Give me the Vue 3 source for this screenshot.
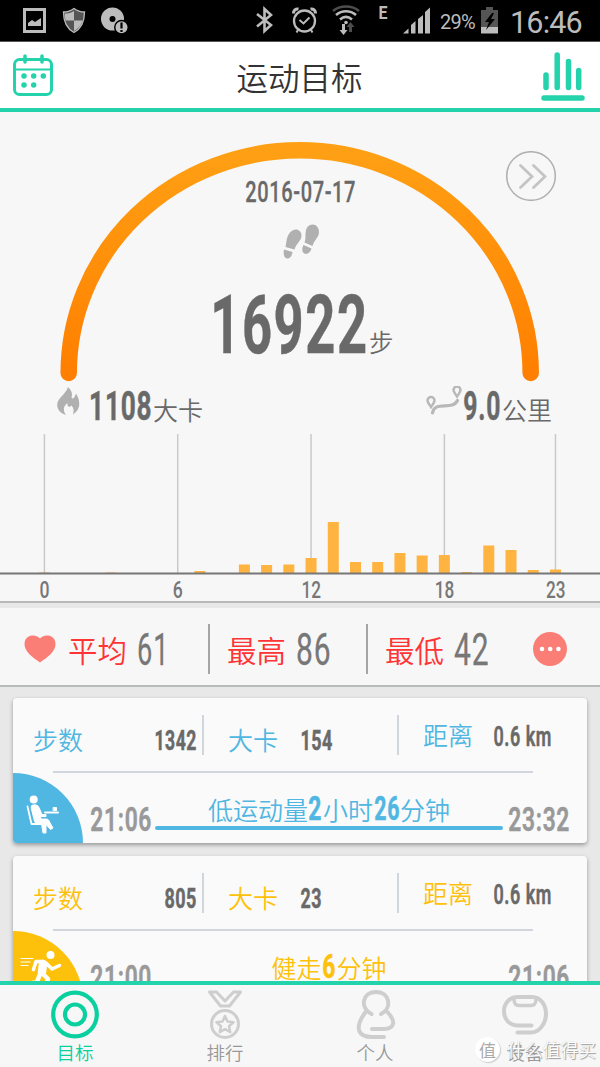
<template>
  <div class="app">
    <div class="status">
      <svg class="st-left" width="112" height="41" viewBox="0 0 112 41">
        <path d="M4.500 9.500h20v22h-20z" fill="none" stroke="#bcbcbc" stroke-width="3" />
        <path d="M8 26v-3l4-3 3 2 6-4v8z" fill="#bcbcbc" />
        <path d="M54 8.500c4 3 7 3.500 10.500 3.500 0 10-3 16.500-10.500 20.500-7.500-4-10.500-10.500-10.500-20.500C47 12 50 11.500 54 8.500z" fill="#555" stroke="#bcbcbc" stroke-width="1.300" />
        <path d="M54 11v9.500h-8.500c-.5-2-.5-5-.5-7 3 0 6-.5 9-2.500zM54 20.500h8.500c-1 4.500-4 8-8.500 10.500z" fill="#bcbcbc" />
        <circle cx="92.500" cy="19" r="11.500" fill="#bcbcbc" />
        <circle cx="92.500" cy="19" r="3" fill="#000" />
        <circle cx="101.500" cy="27.300" r="7.500" fill="#000" />
        <circle cx="101.500" cy="27.300" r="6" fill="#bcbcbc" />
        <path d="M101.500 22.500v6M101.500 30v2" stroke="#000" stroke-width="2.200" />
      </svg>
      <svg class="st-right" width="180" height="41" viewBox="250 0 180 41">
        <path d="M257 14l14 11-6.500 6V9l6.500 6-14 11.500" fill="none" stroke="#bcbcbc" stroke-width="2.600" />
        <g fill="none" stroke="#bcbcbc" stroke-width="2">
          <circle cx="304.500" cy="21" r="10.500" stroke-width="2.300" />
          <path d="M299.500 20l4 3.500 6-6M298 30l-1.500 2.500M311 30l1.500 2.500" />
          <path d="M293.500 13.500c0-3 2-5 5-4.500M315.500 13.500c0-3-2-5-5-4.500" stroke-width="3" />
        </g>
        <g fill="none" stroke="#bcbcbc" stroke-width="2.600">
          <path d="M333 11c7-6 19-6 26 0" stroke="#4d4d4d" />
          <path d="M336 15c6-5 14-5 20 0M340 19.500c4-3.500 8-3.500 12 0" />
        </g>
        <circle cx="346" cy="22.500" r="1.800" fill="#bcbcbc" />
        <path d="M342 24h3v6h2.500l-4 5-4-5h2.500z" fill="#bcbcbc" />
        <path d="M349 32h3v-5h2.500l-4-5-4 5h2.500z" fill="#4d4d4d" />
        <path d="M403 33.500l5.500-5v5zM411 33.500V25l4.500-4v12.500zM418 33.500V19l5-4v18.500zM425 33.500V12l5-4.500v26z" fill="#bcbcbc" />
        <text x="378.500" y="19" font-size="18" font-weight="700" fill="#bcbcbc" textLength="9" lengthAdjust="spacingAndGlyphs">E</text>
      </svg>
      <span class="percent">29%</span>
      <svg class="battery" width="17" height="27" viewBox="0 0 17 27">
        <path d="M5 0h7v3h5v17H0V3h5z" fill="#555" />
        <path d="M0 20h17v6.500H0z" fill="#bcbcbc" />
        <path d="M11 6l-7 9h4l-3 8 9-11h-4l3-6z" fill="#000" />
      </svg>
      <span class="clock">16:46</span>
    </div>

    <header class="header">
      <svg width="40" height="42" viewBox="0 0 40 42" fill="none" stroke="#24d3ac">
        <rect x="1.500" y="5.500" width="37" height="35" rx="5" stroke-width="3" />
        <path d="M1.500 15.500h37" stroke-width="2" />
        <path d="M12 2v6M29 2v6" stroke-width="3.500" stroke-linecap="round" />
        <path d="M11 22h.01M20.700 22h.01M30.300 22h.01M11 31h.01M20.700 31h.01" stroke-width="5.500" stroke-linecap="round" />
      </svg>
      <h1>运动目标</h1>
      <svg class="bars" width="44" height="50" viewBox="0 0 44 50" stroke="#24d3ac" stroke-width="5.500" stroke-linecap="round">
        <path d="M5 23v12.500M16.200 3v32.500M27.500 9.500v26M37.700 18.500v17M3 46h38" />
      </svg>
    </header>

    <main class="main">
      <section class="hero">
        <svg class="arc" width="600" height="275" viewBox="0 112 600 275">
          <defs>
            <linearGradient id="arcFill" x1="0" y1="0" x2="0" y2="1">
              <stop offset="0" stop-color="#ffa014" />
              <stop offset="1" stop-color="#ff7f00" />
            </linearGradient>
          </defs>
          <path d="M68.700 373A231 222.700 0 0 1 530.700 373" fill="none" stroke="url(#arcFill)" stroke-width="16.500" stroke-linecap="round" />
        </svg>
        <button class="next">
          <svg width="50" height="50" viewBox="0 0 50 50" fill="none">
            <circle cx="25" cy="25" r="24.300" stroke="#b0b0b0" stroke-width="1.500" />
            <path d="M14.500 14.500L26 25.500 14.500 36.500M27.500 14.500L39 25.500 27.500 36.500" stroke="#c4c4c4" stroke-width="2.800" stroke-linecap="round" />
          </svg>
        </button>

        <Num class="date" text="2016-07-17" :w="109" :h="21.5" weight="500" />
        <svg class="feet" width="36" height="35" viewBox="0 0 36 35" fill="#b0b0b0">
          <path d="M9.500 6.500C14 4 18.500 7 18.500 11.500c0 5.500-5.500 8-7 14L2.500 23C4 17 3 10.500 9.500 6.500z" />
          <path d="M1 25.500l8.500 2.500c-.5 4-2.500 6.500-5 6.500-3.500 0-4.500-5-3.500-9z" />
          <path d="M27 1C32-1 36 3 36 8c0 5.500-5 8-6.500 14L21.500 18.500c2.500-5-1.500-14 5.500-17.500z" />
          <path d="M20.500 21l8 3.500c-1 4-4 6-6.500 5.300-3-.8-3.500-5-1.500-8.800z" />
        </svg>
        <div class="total">
          <Num text="16922" :w="154" :h="57.5" weight="700" />
          <span>步</span>
        </div>
        <div class="extras">
          <svg class="fire" width="23" height="29" viewBox="0 0 23 29" fill="#b0b0b0">
            <path d="M11 0c3 3 5 6 3.500 10.500 1 2 3 1 4.500-4C21 10 23 14 22 19.500c-1 4-3.500 6-6 8 1-3.500 1-6.500-1.500-9-2 2.500-4.500 1.500-4-2.500-4 3-5 7-1.500 12C4 26.500 0 23 .2 17.500.5 11 9 7 11 0z" />
          </svg>
          <Num text="1108" :w="61" :h="29.5" weight="700" />
          <span class="unit">大卡</span>
          <svg class="route" width="36" height="30" viewBox="0 0 36 30" fill="none">
            <path d="M6.500 27c2-13 20-2 25-12.500" stroke="#b8b8b8" stroke-width="3.200" stroke-linecap="round" />
            <path d="M5 21C3 18 1.500 16.500 1.500 14.500a3.500 3.500 0 0 1 7 0C8.500 16.500 7 18 5 21zM31 10.500c-2-3-3.500-4.500-3.500-6.500a3.500 3.500 0 0 1 7 0c0 2-1.500 3.500-3.500 6.500z" stroke="#b8b8b8" stroke-width="2.500" />
          </svg>
          <Num text="9.0" :w="36" :h="29.5" weight="700" />
          <span class="unit">公里</span>
        </div>

        <svg class="chart" width="600" height="167" viewBox="0 434 600 167">
          <path v-for="h in ticks" :key="h" :d="`M${hourX(h)} 434V573`" stroke="#c9c9c9" stroke-width="1.500" />
          <rect v-for="(v, h) in hours" :key="'b' + h" :x="hourX(h) - 5.500" :y="573 - v" width="11" :height="v" fill="#ffb340" />
          <path d="M0 573.500h600" stroke="#777" stroke-width="2.200" />
          <text
            v-for="h in ticks"
            :key="'t' + h"
            :x="hourX(h) - (h > 9 ? 9.500 : 5)"
            y="598"
            :textLength="h > 9 ? 19.500 : 10"
            lengthAdjust="spacingAndGlyphs"
          >{{ h }}</text>
        </svg>
      </section>

      <section class="heart">
        <svg width="32" height="28" viewBox="0 0 32 28" fill="#fb7e76">
          <path d="M16 3.500C20-1.500 31.500-1 31.500 9c0 8-8.500 13.500-15.500 18.500C9 22.500.5 17 .5 9 .5-1 12-1.500 16 3.500z" />
        </svg>
        <template v-for="(r, i) in rates" :key="r.label">
          <i v-if="i" class="sep"></i>
          <div class="rate">
            <span>{{ r.label }}</span>
            <Num :text="r.value" :w="r.w" :h="32" weight="400" />
          </div>
        </template>
        <svg class="more" width="34" height="34" viewBox="0 0 34 34">
          <circle cx="17" cy="17" r="17" fill="#fb7e76" />
          <path d="M9 17h.01M17.200 17h.01M25.400 17h.01" stroke="#fff" stroke-width="4.600" stroke-linecap="round" />
        </svg>
      </section>

      <article v-for="c in cards" :key="c.start" class="card" :class="c.kind">
        <div class="stats">
          <div class="cell steps">
            <span class="name">步数</span>
            <Num :text="c.steps" :w="c.stepsW" :h="19.5" weight="700" />
          </div>
          <div class="cell cal">
            <span class="name">大卡</span>
            <Num :text="c.cal" :w="c.calW" :h="19.5" weight="700" />
          </div>
          <div class="cell dist">
            <span class="name">距离</span>
            <Num text="0.6 km" :w="57" :h="19.5" weight="600" />
          </div>
        </div>
        <div class="period">
          <div class="badge">
            <svg v-if="c.kind === 'sit'" width="34" height="40" viewBox="0 0 34 40" fill="none" stroke="#fff" stroke-linecap="round" stroke-linejoin="round">
              <circle cx="7.700" cy="4.500" r="4" fill="#fff" stroke="none" />
              <path d="M1.500 11.500L5.500 29H15" stroke-width="1.800" />
              <path d="M6 10.500c3-1.500 6-.5 7 2l3 7h4v2h-5.500l.5 2.500h5c2 0 3 1 3.500 3l3.500 6-2.500 1.500-4.500-5V38h-3l-1.500-9.500H11c-1.500 0-2-1-2.500-2.500L5.500 14.500c-.5-2-.5-3 .5-4z" fill="#fff" stroke-width="1" />
              <path d="M19 17.500h13" stroke-width="2" />
              <path d="M27.500 12.500h3v3h-3z" fill="#fff" stroke-width="1" />
            </svg>
            <svg v-else width="42" height="42" viewBox="0 0 42 42" fill="none" stroke="#fff" stroke-linecap="round" stroke-linejoin="round">
              <circle cx="30.500" cy="5" r="4" fill="#fff" stroke="none" />
              <path d="M1 8.500h12M1 12h9M1 15.500h7" stroke-width="1.200" />
              <path d="M23 14l-1 8" stroke-width="8.500" />
              <path d="M23 11.500h-7l-2.500 8M26 13l6 6 7.500-3.500" stroke-width="3.500" />
              <path d="M22 23l6 6-3 9M20 24l-3 8-9 2" stroke-width="4.500" />
            </svg>
          </div>
          <Num class="from" :text="c.start" :w="60" :h="23.5" weight="600" />
          <div class="activity">
            <p>
              <template v-for="(part, i) in c.text" :key="i">
                <Num v-if="i % 2" :text="part" :w="part.length * 12" :h="23.5" weight="700" />
                <span v-else>{{ part }}</span>
              </template>
            </p>
            <i class="bar"></i>
          </div>
          <Num class="to" :text="c.end" :w="60" :h="23.5" weight="600" />
        </div>
      </article>
    </main>

    <nav class="tabs">
      <a class="tab active">
        <svg width="50" height="52" viewBox="0 0 50 52" fill="none" stroke="#0ad0a0" stroke-width="4.200">
          <circle cx="25" cy="26.500" r="21.800" />
          <circle cx="25" cy="26.500" r="10" />
        </svg>
        <span>目标</span>
      </a>
      <a class="tab">
        <svg width="50" height="52" viewBox="0 0 50 52" fill="none" stroke="#cecece" stroke-width="3" stroke-linejoin="round">
          <path d="M9.500 4h7L25 13l8.500-9h7l-11 14h-9z" />
          <circle cx="25" cy="36" r="13.500" />
          <path d="M25 28l2.500 5.500 6 .7-4.500 4 1.300 6L25 41.200 19.700 44.200l1.300-6-4.500-4 6-.7z" stroke-width="2.500" />
        </svg>
        <span>排行</span>
      </a>
      <a class="tab">
        <svg width="50" height="52" viewBox="0 0 50 52" fill="none" stroke="#cecece" stroke-width="4" stroke-linecap="round">
          <path d="M21.500 26C9.500 20 12 4 26 4S42.500 20 31 26" />
          <path d="M15.500 24C9 33 7.500 39 9.500 43.500c2 4 5 5.500 12 5.500h12.500M37.500 24c3.500 4 6.500 9 5.500 12-1 4-4 5-9 5H22" />
        </svg>
        <span>个人</span>
      </a>
      <a class="tab">
        <svg width="50" height="52" viewBox="0 0 50 52" fill="none" stroke="#cecece" stroke-width="4" stroke-linecap="round" stroke-linejoin="round">
          <path d="M31.500 37.500H18C8 37 4 30 4 23S9 9 18 9h14c9 0 14 8.500 14 17s-6 18.500-15 18.500H17.500" />
          <path d="M14 12c.5 4 1.500 5.500 5 5.500h12c3.500 0 4.500-1.500 5-5.500" stroke-width="3.500" />
        </svg>
        <span>设备</span>
      </a>
    </nav>

    <div class="mark">
      <b>值</b>
      <span>什么值得买</span>
    </div>
  </div>
</template>

<script setup>
import { h } from 'vue';

// Condensed number, the svg box is exactly as big as the digits
const Num = (props) => {
  const pad = (props.w / props.text.length) * 0.06;
  return h('svg', { class: 'num', width: props.w, height: props.h }, [
    h(
      'text',
      {
        x: -pad,
        y: props.h,
        'font-size': props.h / 0.711,
        'font-weight': props.weight,
        fill: 'currentColor',
        stroke: 'currentColor',
        'stroke-width': props.weight > 500 ? 0.5 : 0.3,
        'letter-spacing': '0.03em',
        textLength: props.w + pad * 2.5,
        lengthAdjust: 'spacingAndGlyphs',
      },
      props.text
    ),
  ]);
};
Num.props = ['text', 'w', 'h', 'weight'];

const ticks = [0, 6, 12, 18, 23];
const hours = [0.5, 0, 0, 0.5, 0, 0, 0, 2, 0, 8.5, 8, 8.5, 15, 51, 11, 11, 20, 17.5, 18, 1, 27.5, 23, 3, 3.5];
const hourX = (hour) => 44.4 + hour * 22.22;

const rates = [
  { label: '平均', value: '61', w: 30 },
  { label: '最高', value: '86', w: 33 },
  { label: '最低', value: '42', w: 33 },
];

const cards = [
  {
    kind: 'sit',
    steps: '1342',
    stepsW: 41,
    cal: '154',
    calW: 31,
    start: '21:06',
    end: '23:32',
    text: ['低运动量', '2', '小时', '26', '分钟'],
  },
  {
    kind: 'walk',
    steps: '805',
    stepsW: 31,
    cal: '23',
    calW: 20,
    start: '21:00',
    end: '21:06',
    text: ['健走', '6', '分钟'],
  },
];
</script>

<style>
body {
  background: #e8e8e8;
}
</style>

<style scoped>
.app {
  position: relative;
  display: flex;
  flex-direction: column;
  width: 600px;
  height: 1067px;
  overflow: hidden;
  background: #e8e8e8;
  color: #696969;
  font-family: "Noto Sans CJK SC", sans-serif;
  font-weight: 350;
}

svg {
  display: block;
  flex: none;
}

svg :deep(text),
svg text {
  font-family: Roboto, sans-serif;
}

.num {
  overflow: visible;
}

h1,
p {
  margin: 0;
  font-weight: 350;
}

/* status bar */
.status {
  display: flex;
  align-items: center;
  box-sizing: border-box;
  height: 42px;
  flex: none;
  background: #000;
  border-bottom: 1px solid #555;
  color: #bcbcbc;
  font-family: Roboto, sans-serif;
  font-weight: 400;
}

.st-left {
  margin-left: 20px;
}

.st-right {
  margin-left: 118px;
}

.percent {
  width: 36px;
  margin: 2px 0 0 10px;
  font-size: 20px;
  letter-spacing: -0.8px;
}

.battery {
  margin: 0 0 1px 5px;
}

.clock {
  margin: 3px 0 0 12px;
  font-size: 30.500px;
  letter-spacing: -0.8px;
}

/* header */
.header {
  display: flex;
  align-items: center;
  justify-content: space-between;
  box-sizing: border-box;
  height: 70px;
  flex: none;
  padding: 0 15px 0 13px;
  background: #fff;
  border-bottom: 4px solid #24d3ac;
}

h1 {
  padding: 2px 0 0 5px;
  color: #333;
  font-size: 31.500px;
  line-height: 40px;
}

.bars {
  margin-top: 3px;
}

.main {
  flex: 1;
  min-height: 0;
  overflow: hidden;
}

/* day summary */
.hero {
  position: relative;
  display: flex;
  flex-direction: column;
  align-items: center;
  height: 489px;
  background: #f7f7f7;
  border-bottom: 2px solid #b8b8b8;
}

.arc {
  position: absolute;
  top: 0;
  left: 0;
}

.next {
  position: absolute;
  top: 39px;
  right: 44px;
  padding: 0;
  border: 0;
  background: none;
}

.date {
  margin-top: 68px;
}

.feet {
  margin: 22px 0 0 2px;
}

.total {
  display: flex;
  align-items: baseline;
  align-self: flex-start;
  height: 58px;
  margin: 36px 0 0 212px;
  line-height: 1;
}

.total span {
  padding-top: 1px;
  margin-left: 3px;
  font-size: 24.500px;
}

.extras {
  display: flex;
  align-items: flex-start;
  align-self: stretch;
  height: 30px;
  margin-top: 37px;
  padding-left: 57px;
  line-height: 1;
}

.fire {
  margin: -3px 10px 0 0;
}

.unit {
  width: 50px;
  margin: 7px 0 0 2px;
  font-size: 25px;
}

.route {
  margin: -4px 2px 0 223px;
}

.chart {
  margin-top: 14px;
}

.chart text {
  fill: #777;
  font-size: 24px;
  font-weight: 500;
}

/* heart rate */
.heart {
  display: flex;
  align-items: center;
  box-sizing: border-box;
  height: 79px;
  margin-top: 5px;
  padding: 4px 0 0 24px;
  background: #f7f7f7;
  border-bottom: 2px solid #b8bcba;
}

.rate {
  display: flex;
  align-items: flex-end;
  width: 156px;
  padding-left: 17px;
  box-sizing: border-box;
  color: #777;
  line-height: 1;
}

.rate:nth-of-type(1) {
  width: 152px;
  padding-left: 12px;
}

.rate span {
  width: 60px;
  margin-right: 10px;
  color: #ff3434;
  font-size: 29.500px;
}

.sep {
  width: 2px;
  height: 50px;
  background: #a5a5a5;
}

.more {
  margin-left: 9px;
}

/* activity cards */
.card {
  width: 574px;
  height: 145px;
  margin: 11px 13px 13px;
  background: #fafafa;
  border-radius: 4px;
  box-shadow: 0 2px 4px rgba(0, 0, 0, 0.35);
  overflow: hidden;
}

.sit {
  --tone: #50b6e2;
}

.walk {
  --tone: #fec10b;
}

.stats {
  display: flex;
  box-sizing: border-box;
  width: 480px;
  height: 75px;
  margin-left: 40px;
  padding-top: 17px;
  border-bottom: 2px solid #d0d6dc;
}

.cell {
  display: flex;
  align-items: baseline;
  flex: none;
  box-sizing: border-box;
  height: 40px;
  padding-top: 11.500px;
  line-height: 1;
}

.name {
  color: var(--tone);
  font-size: 25px;
}

.steps {
  justify-content: space-between;
  width: 171px;
  margin-left: -20px;
  padding-right: 6px;
  border-right: 2px solid #d0d6dc;
}

.cal {
  width: 195px;
  padding-left: 24px;
  gap: 23px;
  border-right: 2px solid #d0d6dc;
}

.dist {
  padding: 7px 0 0 24px;
  gap: 21px;
}

.period {
  display: flex;
  height: 70px;
}

.badge {
  width: 70px;
  height: 70px;
  background: var(--tone);
  border-top-right-radius: 70px;
}

.sit .badge svg {
  margin: 22px 0 0 13px;
}

.walk .badge svg {
  margin: 19px 0 0 7px;
}

.from,
.to {
  margin-top: 34px;
  color: #999;
}

.from {
  margin-left: 8px;
}

.activity {
  width: 348px;
  margin: 22px 6px 0 4px;
}

.activity p {
  display: flex;
  align-items: baseline;
  justify-content: center;
  gap: 1.500px;
  box-sizing: border-box;
  height: 31px;
  padding-top: 1px;
  color: var(--tone);
  font-size: 25px;
  line-height: 1;
}

.bar {
  display: block;
  height: 3.500px;
  border-radius: 2px;
  background: var(--tone);
}

.walk .bar {
  visibility: hidden;
}

/* bottom tabs */
.tabs {
  display: flex;
  box-sizing: border-box;
  height: 86px;
  flex: none;
  background: #f7f7f7;
  border-top: 4px solid #24d3ac;
}

.tab {
  display: flex;
  flex: 1;
  flex-direction: column;
  align-items: center;
  padding-top: 3px;
  color: #999;
  font-size: 18.500px;
  line-height: 24px;
}

.active {
  color: #0ad0a0;
}

.mark {
  position: absolute;
  right: 4px;
  bottom: 5px;
  display: flex;
  align-items: center;
  gap: 7px;
  color: #fff;
  font-size: 17.800px;
  line-height: 25px;
  text-shadow: 1px 1px 1px #999, 0 0 1px #bbb;
}

.mark b {
  width: 25px;
  height: 25px;
  border-radius: 50%;
  background: #fff;
  box-shadow: 1px 1px 1px #ccc;
  color: #aaa;
  font-size: 17px;
  font-weight: 400;
  text-align: center;
  text-shadow: none;
}
</style>
